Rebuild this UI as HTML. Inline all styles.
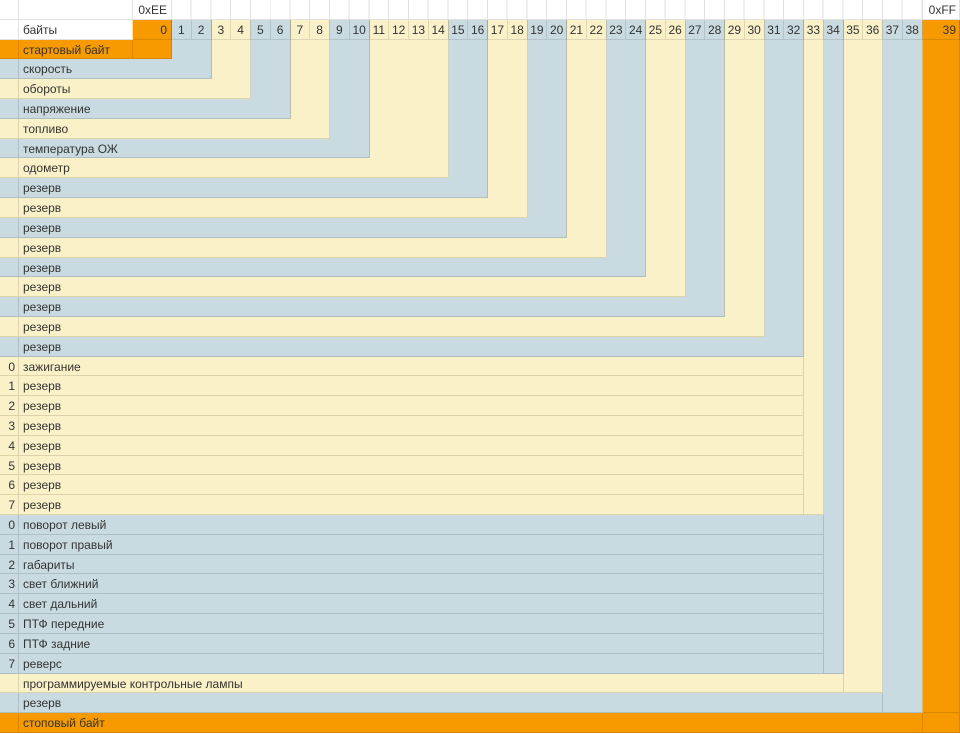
<!DOCTYPE html>
<html><head><meta charset="utf-8"><style>
body{margin:0;width:960px;height:733px;overflow:hidden;background:#fff;font-family:"Liberation Sans",sans-serif;font-size:12px;color:#333}
div{position:absolute;box-sizing:border-box}
.o{background:#f79a00;border-right:1px solid #d98600;border-bottom:1px solid #d98600}
.b{background:#c9dbe0;border-right:1px solid #aebfc4;border-bottom:1px solid #aebfc4}
.y{background:#faf1c9;border-right:1px solid #ddd3a8;border-bottom:1px solid #ddd3a8}
.w{background:#fff;border-right:1px solid #e2e2e2;border-bottom:1px solid #e2e2e2;height:19.81px;top:0}
.h{top:19.81px;height:19.81px;line-height:21px;text-align:center;border-right:1px solid rgba(0,0,0,.1);border-bottom:1px solid rgba(0,0,0,.1)}
.r{left:0;height:19.81px;line-height:21px}
.r i{position:absolute;left:0;top:0;width:19px;height:100%;border-right:1px solid rgba(0,0,0,.12);text-align:right;padding-right:3px;box-sizing:border-box;font-style:normal}
.r span{position:absolute;left:23px;top:0}
</style></head><body>
<div class="w" style="left:0;width:19px"></div>
<div class="w" style="left:19px;width:114px"></div>
<div class="w" style="left:133px;width:39px;text-align:right;padding-right:4px;line-height:21px">0xEE</div>
<div class="w" style="left:172px;width:750.5px;background:repeating-linear-gradient(90deg,#fff 0,#fff 18.75px,#e2e2e2 18.75px,#e2e2e2 19.75px)"></div>
<div class="w" style="left:922.5px;width:37.5px;text-align:right;padding-right:3px;line-height:21px">0xFF</div>
<div class="w" style="top:19.81px;left:0;width:19px"></div>
<div class="w" style="top:19.81px;left:19px;width:114px;line-height:21px;padding-left:4px">байты</div>
<div class="o" style="left:133px;width:39px;top:19.81px;height:39.62px"></div>
<div class="b" style="left:172px;width:39.5px;top:19.81px;height:59.43px"></div>
<div class="y" style="left:211.5px;width:39.5px;top:19.81px;height:79.24px"></div>
<div class="b" style="left:251px;width:39.5px;top:19.81px;height:99.05px"></div>
<div class="y" style="left:290.5px;width:39.5px;top:19.81px;height:118.86px"></div>
<div class="b" style="left:330px;width:39.5px;top:19.81px;height:138.67px"></div>
<div class="y" style="left:369.5px;width:79px;top:19.81px;height:158.48px"></div>
<div class="b" style="left:448.5px;width:39.5px;top:19.81px;height:178.29px"></div>
<div class="y" style="left:488px;width:39.5px;top:19.81px;height:198.1px"></div>
<div class="b" style="left:527.5px;width:39.5px;top:19.81px;height:217.91px"></div>
<div class="y" style="left:567px;width:39.5px;top:19.81px;height:237.72px"></div>
<div class="b" style="left:606.5px;width:39.5px;top:19.81px;height:257.53px"></div>
<div class="y" style="left:646px;width:39.5px;top:19.81px;height:277.34px"></div>
<div class="b" style="left:685.5px;width:39.5px;top:19.81px;height:297.15px"></div>
<div class="y" style="left:725px;width:39.5px;top:19.81px;height:316.96px"></div>
<div class="b" style="left:764.5px;width:39.5px;top:19.81px;height:336.77px"></div>
<div class="y" style="left:804px;width:19.75px;top:19.81px;height:495.25px"></div>
<div class="b" style="left:823.75px;width:19.75px;top:19.81px;height:653.73px"></div>
<div class="y" style="left:843.5px;width:39.5px;top:19.81px;height:673.54px"></div>
<div class="b" style="left:883px;width:39.5px;top:19.81px;height:693.35px"></div>
<div class="o" style="left:922.5px;width:37.5px;top:19.81px;height:693.35px"></div>
<div class="h" style="left:133px;width:39px;text-align:right;padding-right:4px">0</div>
<div class="h" style="left:172px;width:19.75px">1</div><div class="h" style="left:191.75px;width:19.75px">2</div>
<div class="h" style="left:211.5px;width:19.75px">3</div><div class="h" style="left:231.25px;width:19.75px">4</div>
<div class="h" style="left:251px;width:19.75px">5</div><div class="h" style="left:270.75px;width:19.75px">6</div>
<div class="h" style="left:290.5px;width:19.75px">7</div><div class="h" style="left:310.25px;width:19.75px">8</div>
<div class="h" style="left:330px;width:19.75px">9</div><div class="h" style="left:349.75px;width:19.75px">10</div>
<div class="h" style="left:369.5px;width:19.75px">11</div><div class="h" style="left:389.25px;width:19.75px">12</div>
<div class="h" style="left:409px;width:19.75px">13</div><div class="h" style="left:428.75px;width:19.75px">14</div>
<div class="h" style="left:448.5px;width:19.75px">15</div><div class="h" style="left:468.25px;width:19.75px">16</div>
<div class="h" style="left:488px;width:19.75px">17</div><div class="h" style="left:507.75px;width:19.75px">18</div>
<div class="h" style="left:527.5px;width:19.75px">19</div><div class="h" style="left:547.25px;width:19.75px">20</div>
<div class="h" style="left:567px;width:19.75px">21</div><div class="h" style="left:586.75px;width:19.75px">22</div>
<div class="h" style="left:606.5px;width:19.75px">23</div><div class="h" style="left:626.25px;width:19.75px">24</div>
<div class="h" style="left:646px;width:19.75px">25</div><div class="h" style="left:665.75px;width:19.75px">26</div>
<div class="h" style="left:685.5px;width:19.75px">27</div><div class="h" style="left:705.25px;width:19.75px">28</div>
<div class="h" style="left:725px;width:19.75px">29</div><div class="h" style="left:744.75px;width:19.75px">30</div>
<div class="h" style="left:764.5px;width:19.75px">31</div><div class="h" style="left:784.25px;width:19.75px">32</div>
<div class="h" style="left:804px;width:19.75px">33</div><div class="h" style="left:823.75px;width:19.75px">34</div>
<div class="h" style="left:843.5px;width:19.75px">35</div><div class="h" style="left:863.25px;width:19.75px">36</div>
<div class="h" style="left:883px;width:19.75px">37</div><div class="h" style="left:902.75px;width:19.75px">38</div>
<div class="h" style="left:922.5px;width:37.5px;text-align:right;padding-right:3px">39</div>
<div class="r o" style="top:39.62px;width:172px"><i></i><span>стартовый байт</span></div>
<div style="left:132px;top:39.62px;width:1px;height:19.81px;background:#d98600"></div>
<div class="r b" style="top:59.43px;width:211.5px"><i></i><span>скорость</span></div>
<div class="r y" style="top:79.24px;width:251px"><i></i><span>обороты</span></div>
<div class="r b" style="top:99.05px;width:290.5px"><i></i><span>напряжение</span></div>
<div class="r y" style="top:118.86px;width:330px"><i></i><span>топливо</span></div>
<div class="r b" style="top:138.67px;width:369.5px"><i></i><span>температура ОЖ</span></div>
<div class="r y" style="top:158.48px;width:448.5px"><i></i><span>одометр</span></div>
<div class="r b" style="top:178.29px;width:488px"><i></i><span>резерв</span></div>
<div class="r y" style="top:198.1px;width:527.5px"><i></i><span>резерв</span></div>
<div class="r b" style="top:217.91px;width:567px"><i></i><span>резерв</span></div>
<div class="r y" style="top:237.72px;width:606.5px"><i></i><span>резерв</span></div>
<div class="r b" style="top:257.53px;width:646px"><i></i><span>резерв</span></div>
<div class="r y" style="top:277.34px;width:685.5px"><i></i><span>резерв</span></div>
<div class="r b" style="top:297.15px;width:725px"><i></i><span>резерв</span></div>
<div class="r y" style="top:316.96px;width:764.5px"><i></i><span>резерв</span></div>
<div class="r b" style="top:336.77px;width:804px"><i></i><span>резерв</span></div>
<div class="r y" style="top:356.58px;width:804px"><i>0</i><span>зажигание</span></div>
<div class="r y" style="top:376.39px;width:804px"><i>1</i><span>резерв</span></div>
<div class="r y" style="top:396.2px;width:804px"><i>2</i><span>резерв</span></div>
<div class="r y" style="top:416.01px;width:804px"><i>3</i><span>резерв</span></div>
<div class="r y" style="top:435.82px;width:804px"><i>4</i><span>резерв</span></div>
<div class="r y" style="top:455.63px;width:804px"><i>5</i><span>резерв</span></div>
<div class="r y" style="top:475.44px;width:804px"><i>6</i><span>резерв</span></div>
<div class="r y" style="top:495.25px;width:804px"><i>7</i><span>резерв</span></div>
<div class="r b" style="top:515.06px;width:823.75px"><i>0</i><span>поворот левый</span></div>
<div class="r b" style="top:534.87px;width:823.75px"><i>1</i><span>поворот правый</span></div>
<div class="r b" style="top:554.68px;width:823.75px"><i>2</i><span>габариты</span></div>
<div class="r b" style="top:574.49px;width:823.75px"><i>3</i><span>свет ближний</span></div>
<div class="r b" style="top:594.3px;width:823.75px"><i>4</i><span>свет дальний</span></div>
<div class="r b" style="top:614.11px;width:823.75px"><i>5</i><span>ПТФ передние</span></div>
<div class="r b" style="top:633.92px;width:823.75px"><i>6</i><span>ПТФ задние</span></div>
<div class="r b" style="top:653.73px;width:823.75px"><i>7</i><span>реверс</span></div>
<div class="r y" style="top:673.54px;width:843.5px"><i></i><span>программируемые контрольные лампы</span></div>
<div class="r b" style="top:693.35px;width:883px"><i></i><span>резерв</span></div>
<div class="r o" style="top:713.16px;width:960px;height:19.84px"><i></i><span>стоповый байт</span></div>
<div style="left:922px;top:713.16px;width:1px;height:19.84px;background:#d98600"></div>
</body></html>
